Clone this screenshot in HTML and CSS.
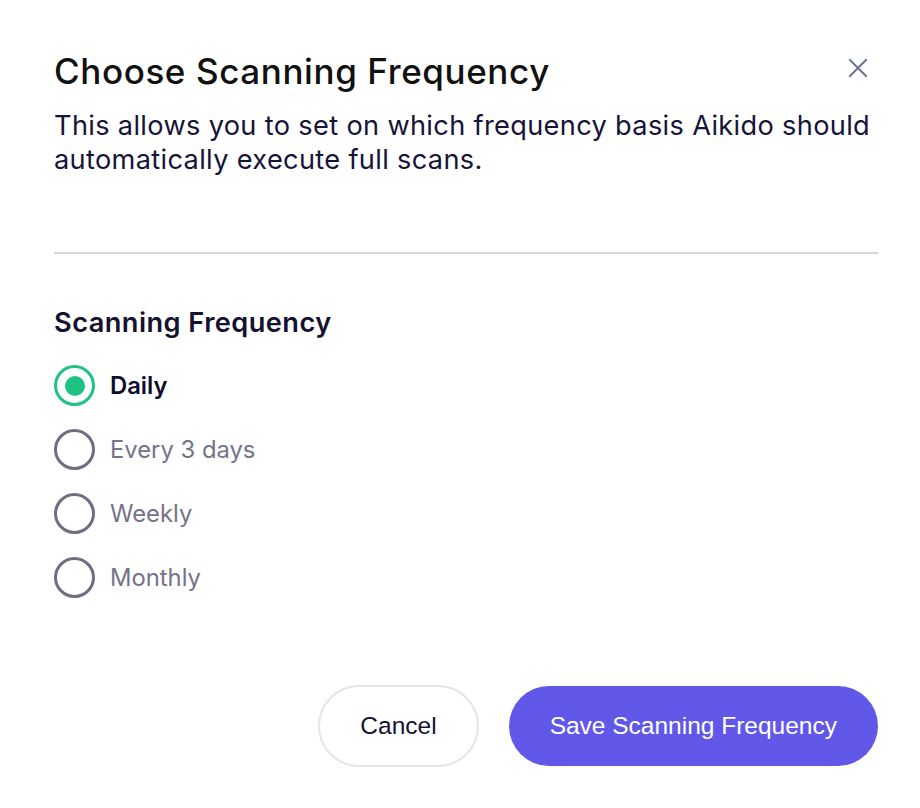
FILE: index.html
```html
<!DOCTYPE html>
<html lang="en">
<head>
  <meta charset="UTF-8">
  <meta name="viewport" content="width=device-width, initial-scale=1.0">
  <title>Choose Scanning Frequency</title>
  <link rel="stylesheet" href="styles.css">
</head>
<body>
  <div class="modal">
    <div class="modal-header">
      <h2>Choose Scanning Frequency</h2>
      <button class="close" type="button" aria-label="Close">
        <svg width="20" height="20" viewBox="0 0 20 20" fill="none" stroke="#6c768f" stroke-width="2" stroke-linecap="square">
          <path d="M2 2L18 18M18 2L2 18"/>
        </svg>
      </button>
    </div>
    <p class="modal-desc">This allows you to set on which frequency basis Aikido should automatically execute full scans.</p>

    <hr class="divider">

    <h3>Scanning Frequency</h3>
    <div class="options">
      <label class="option">
        <input type="radio" name="frequency" value="daily" checked>
        <span class="radio"></span>
        <span class="option-label">Daily</span>
      </label>
      <label class="option">
        <input type="radio" name="frequency" value="3days">
        <span class="radio"></span>
        <span class="option-label">Every 3 days</span>
      </label>
      <label class="option">
        <input type="radio" name="frequency" value="weekly">
        <span class="radio"></span>
        <span class="option-label">Weekly</span>
      </label>
      <label class="option">
        <input type="radio" name="frequency" value="monthly">
        <span class="radio"></span>
        <span class="option-label">Monthly</span>
      </label>
    </div>

    <div class="actions">
      <button class="btn btn-cancel" type="button">Cancel</button>
      <button class="btn btn-save" type="button">Save Scanning Frequency</button>
    </div>
  </div>
</body>
</html>
```

FILE: styles.css
```css
body {
  margin: 0;
  background-color: #fff;
  font-family: Inter, "Noto Sans", sans-serif;
}
.modal {
  width: 824px;
  padding: 47px 0 0 54px;
}
.modal-header {
  display: flex;
  justify-content: space-between;
  align-items: flex-start;
}
h2 {
  margin: 0;
  font-size: 35px;
  line-height: 48px;
  font-weight: 500;
  letter-spacing: 0.6px;
  color: #111;
}
.close {
  border: none;
  background: none;
  padding: 0;
  margin: 11px 10px 0 0;
  cursor: pointer;
  display: flex;
}
.modal-desc {
  margin: 14px 0 0;
  font-size: 27.2px;
  line-height: 34px;
  letter-spacing: 0.33px;
  color: #161438;
}
.divider {
  border: none;
  height: 2px;
  background-color: #d5d6de;
  margin: 75px 0 0;
}
h3 {
  margin: 52px 0 0;
  font-size: 27.2px;
  line-height: 34px;
  font-weight: 600;
  letter-spacing: 0.45px;
  color: #14122f;
}
.options {
  display: flex;
  flex-direction: column;
  gap: 23px;
  margin-top: 25px;
}
.option {
  display: flex;
  align-items: center;
  gap: 15px;
  cursor: pointer;
}
.option input {
  display: none;
}
.radio {
  width: 41px;
  height: 41px;
  box-sizing: border-box;
  border: 3.4px solid #6f6e80;
  border-radius: 50%;
  display: flex;
  align-items: center;
  justify-content: center;
}
.option input:checked + .radio {
  border-color: #1ec283;
}
.option input:checked + .radio:before {
  content: "";
  width: 20px;
  height: 20px;
  border-radius: 50%;
  background-color: #1ec283;
}
.option-label {
  font-size: 23.8px;
  color: #74738a;
}
.option input:checked ~ .option-label {
  font-weight: 600;
  color: #0f0d2e;
}
.actions {
  display: flex;
  justify-content: flex-end;
  align-items: center;
  gap: 30px;
  margin-top: 87px;
}
.btn {
  font-family: "Liberation Sans", Arial, sans-serif;
  font-size: 24.5px;
  height: 82px;
  padding: 0 40px;
  border-radius: 41px;
  cursor: pointer;
}
.btn-cancel {
  background-color: #fff;
  border: 2px solid #e4e4e9;
  color: #14122f;
}
.btn-save {
  height: 80px;
  padding: 0 41px;
  border: none;
  background-color: #6158ea;
  color: #fff;
}
```
